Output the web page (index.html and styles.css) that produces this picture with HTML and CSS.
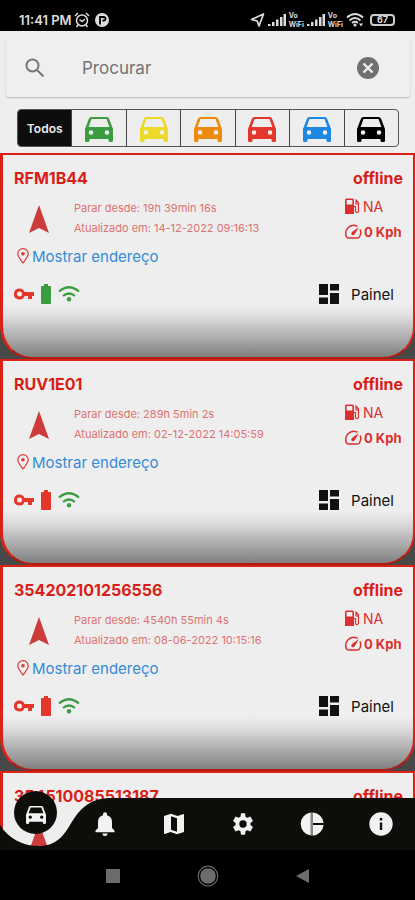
FILE: index.html
```html
<!DOCTYPE html>
<html lang="pt">
<head>
<meta charset="utf-8">
<meta name="viewport" content="width=device-width, initial-scale=1">
<title>Veículos</title>
<link rel="stylesheet" href="styles.css">
</head>
<body>
<svg class="sprite" aria-hidden="true">
  <symbol id="car" viewBox="0 0 28 25"><path fill-rule="evenodd" d="M6.500 0H21.500Q23.500 0 24.200 2L28 12V23.500Q28 25 26.500 25H25Q23.500 25 23.500 23.500V22H4.500V23.500Q4.500 25 3 25H1.500Q0 25 0 23.500V12L3.800 2Q4.500 0 6.500 0ZM6.500 2L3.600 10H24.400L21.500 2ZM6 13.200A2.300 2.300 0 1 0 6 17.800A2.300 2.300 0 1 0 6 13.200ZM22 13.200A2.300 2.300 0 1 0 22 17.800A2.300 2.300 0 1 0 22 13.200Z"/></symbol>
  <symbol id="arrow" viewBox="0 0 24 30"><path d="M12 1L22 29L12 24L2 29Z"/></symbol>
  <symbol id="pin" viewBox="0 0 12 16"><path fill="none" stroke="currentColor" stroke-width="1.200" d="M6 15C3 11 .8 8.500 .8 5.800A5.200 5.200 0 0 1 11.200 5.800C11.200 8.500 9 11 6 15Z"/><circle cx="6" cy="5.800" r="1.800"/></symbol>
  <symbol id="fuel" viewBox="0 0 16 17"><path fill-rule="evenodd" d="M1 16V2Q1 .5 2.500 .5H8.500Q10 .5 10 2V16ZM2.600 2V6.500H8.400V2Z"/><path fill="none" stroke="currentColor" stroke-width="1.200" d="M10 8.500H11.500V13.500Q12.800 16 14.500 13.500V5L11.500 1.500M12 3V6H14.500"/></symbol>
  <symbol id="speed" viewBox="0 0 18 15"><path fill="none" stroke="currentColor" stroke-width="1.500" stroke-linecap="round" d="M13 2A8 8 0 0 0 3 13.500Q3.500 14 4.500 14H13.500Q14.500 14 15 13.500A8 8 0 0 0 16.300 6"/><path d="M15 3L10.500 10.500Q9 12 7.700 10.800Q6.500 9.500 8 8Z"/></symbol>
  <symbol id="key" viewBox="0 0 20 12"><path fill-rule="evenodd" d="M5.500 .5A5.500 5.500 0 0 1 10.600 4H20V8H18V11H14V8H10.600A5.500 5.500 0 1 1 5.500 .5ZM5.500 3.500A2.500 2.500 0 1 0 5.500 8.500A2.500 2.500 0 1 0 5.500 3.500Z"/></symbol>
  <symbol id="battery" viewBox="0 0 10 20"><path d="M3 0H7V2H9Q10 2 10 3V19Q10 20 9 20H1Q0 20 0 19V3Q0 2 1 2H3Z"/></symbol>
  <symbol id="wifi" viewBox="0 0 22 16"><path fill="none" stroke="currentColor" stroke-width="2.200" d="M1 5.500Q11 -3 21 5.500M5 10Q11 5 17 10"/><circle cx="11" cy="13.300" r="2.200"/></symbol>
  <symbol id="netwifi" viewBox="0 0 18 14"><path fill="none" stroke="currentColor" stroke-width="1.800" d="M1 4.500Q9 -2.500 17 4.500M3.500 7.500Q9 2.500 14.500 7.500M6 10Q9 7.500 12 10"/><circle cx="9" cy="12" r="1.600"/><path d="M13 10.500L15 13.500L17 10.500Z"/></symbol>
  <symbol id="panel" viewBox="0 0 20 20"><path d="M0 0H9V11H0ZM11 0H20V6.500H11ZM0 13.500H9V20H0ZM11 9H20V20H11Z"/></symbol>
  <symbol id="signal" viewBox="0 0 18 12"><path d="M0 10H2.500V12H0ZM4 8H6.500V12H4ZM8 5.500H10.500V12H8ZM12 3H14.500V12H12ZM15.500 0H18V12H15.500Z"/></symbol>
</svg>

<div class="screen">
  <header class="status">
    <span class="clock">11:41 PM</span>
    <svg class="alarm" viewBox="0 0 16 16"><g fill="none" stroke="currentColor" stroke-width="1.500"><circle cx="8" cy="8.500" r="5.500"/><path d="M1 4L4 1M15 4L12 1M5.500 7.500L8 9.500L11 7M4 13L2.500 15M12 13L13.500 15"/></g></svg>
    <svg class="badge" viewBox="0 0 14 14"><circle cx="7" cy="7" r="7"/><path fill="none" stroke="#000" stroke-width="1.800" d="M5 11.500V4H8.500Q10.500 4 10.500 5.800T8.500 7.500H7.500"/></svg>
    <div class="system">
      <svg class="locate" viewBox="0 0 15 14"><path fill="none" stroke="currentColor" stroke-width="1.700" stroke-linejoin="round" d="M13.500 1L9 13L7.200 8L1.500 6.500Z"/></svg>
      <svg class="signal"><use href="#signal"/></svg>
      <span class="vowifi"><span>Vo</span><span>WiFi</span></span>
      <svg class="signal"><use href="#signal"/></svg>
      <span class="vowifi"><span>Vo</span><span>WiFi</span></span>
      <svg class="net"><use href="#netwifi"/></svg>
      <span class="charge">67</span>
    </div>
  </header>

  <form class="search">
    <svg class="lens" viewBox="0 0 20 20"><path fill="none" stroke="currentColor" stroke-width="2" d="M12.500 12.500L18.500 18.500M13.500 7.500A6 6 0 1 1 1.500 7.500A6 6 0 1 1 13.500 7.500Z"/></svg>
    <input type="text" placeholder="Procurar" aria-label="Procurar">
    <button type="reset" class="clear" aria-label="Limpar"><svg viewBox="0 0 22 22"><circle cx="11" cy="11" r="11"/><path stroke="#eee" stroke-width="2.400" d="M6.500 6.500L15.500 15.500M15.500 6.500L6.500 15.500"/></svg></button>
  </form>

  <div class="filters">
    <button class="all">Todos</button>
    <button class="green" aria-label="Verde"><svg><use href="#car"/></svg></button>
    <button class="yellow" aria-label="Amarelo"><svg><use href="#car"/></svg></button>
    <button class="orange" aria-label="Laranja"><svg><use href="#car"/></svg></button>
    <button class="red" aria-label="Vermelho"><svg><use href="#car"/></svg></button>
    <button class="blue" aria-label="Azul"><svg><use href="#car"/></svg></button>
    <button class="black" aria-label="Preto"><svg><use href="#car"/></svg></button>
  </div>

  <main class="list">
    <div class="slot"><article class="card">
      <div class="head"><h2>RFM1B44</h2><span>offline</span></div>
      <div class="info">
        <svg class="arrow"><use href="#arrow"/></svg>
        <div class="times"><p>Parar desde: 19h 39min 16s</p><p>Atualizado em: 14-12-2022 09:16:13</p></div>
        <div class="meters"><p><svg class="fuel"><use href="#fuel"/></svg>NA</p><p class="kph"><svg class="speed"><use href="#speed"/></svg>0 Kph</p></div>
      </div>
      <a class="address" href="#"><svg><use href="#pin"/></svg>Mostrar endereço</a>
      <div class="foot">
        <svg class="key red"><use href="#key"/></svg><svg class="battery green"><use href="#battery"/></svg><svg class="wifi green"><use href="#wifi"/></svg>
        <button class="panel"><svg><use href="#panel"/></svg>Painel</button>
      </div>
    </article></div>
    <div class="slot"><article class="card">
      <div class="head"><h2>RUV1E01</h2><span>offline</span></div>
      <div class="info">
        <svg class="arrow"><use href="#arrow"/></svg>
        <div class="times"><p>Parar desde: 289h 5min 2s</p><p>Atualizado em: 02-12-2022 14:05:59</p></div>
        <div class="meters"><p><svg class="fuel"><use href="#fuel"/></svg>NA</p><p class="kph"><svg class="speed"><use href="#speed"/></svg>0 Kph</p></div>
      </div>
      <a class="address" href="#"><svg><use href="#pin"/></svg>Mostrar endereço</a>
      <div class="foot">
        <svg class="key red"><use href="#key"/></svg><svg class="battery red"><use href="#battery"/></svg><svg class="wifi green"><use href="#wifi"/></svg>
        <button class="panel"><svg><use href="#panel"/></svg>Painel</button>
      </div>
    </article></div>
    <div class="slot"><article class="card">
      <div class="head"><h2>354202101256556</h2><span>offline</span></div>
      <div class="info">
        <svg class="arrow"><use href="#arrow"/></svg>
        <div class="times"><p>Parar desde: 4540h 55min 4s</p><p>Atualizado em: 08-06-2022 10:15:16</p></div>
        <div class="meters"><p><svg class="fuel"><use href="#fuel"/></svg>NA</p><p class="kph"><svg class="speed"><use href="#speed"/></svg>0 Kph</p></div>
      </div>
      <a class="address" href="#"><svg><use href="#pin"/></svg>Mostrar endereço</a>
      <div class="foot">
        <svg class="key red"><use href="#key"/></svg><svg class="battery red"><use href="#battery"/></svg><svg class="wifi green"><use href="#wifi"/></svg>
        <button class="panel"><svg><use href="#panel"/></svg>Painel</button>
      </div>
    </article></div>
    <div class="slot"><article class="card">
      <div class="head"><h2>354510085513187</h2><span>offline</span></div>
      <div class="info"><svg class="arrow"><use href="#arrow"/></svg></div>
    </article></div>
  </main>

  <div class="bottom">
    <nav class="tabs">
      <svg class="notch" viewBox="0 0 116 52"><path d="M0 27C9 41 23 48 39 48C55 48 63 39 70 27C80 10 90 0 112 0H116V52H0Z"/></svg>
      <a class="current" href="#" aria-label="Veículos"><svg viewBox="0 0 28 25"><use href="#car"/></svg></a>
      <a href="#" aria-label="Alertas"><svg viewBox="0 0 24 24"><path d="M12 24Q14.500 24 14.500 21.500H9.500Q9.500 24 12 24ZM19 16V10Q19 4.500 14 3.200V2Q14 .3 12 .3T10 2V3.200Q5 4.500 5 10V16L2.500 18.500V20.300H21.500V18.500Z"/></svg></a>
      <a href="#" aria-label="Mapa"><svg viewBox="0 0 24 24"><path fill-rule="evenodd" d="M21.500 2L15.500 4L9 1.800L2 4V21.500L3 22L8.500 20L15 22.300L22 20V2.500ZM9 4.200L15 6.300V19.800L9 17.700Z"/></svg></a>
      <a href="#" aria-label="Ajustes"><svg viewBox="0 0 24 24"><path d="M19.400 13L19.500 12L19.400 11L22 9L19.400 4.500L16.300 5.800L14.500 4.800L14 1.200H10L9.500 4.800L7.700 5.800L4.600 4.500L2 9L4.600 11V13L2 15L4.600 19.500L7.700 18.200L9.500 19.200L10 22.800H14L14.500 19.200L16.300 18.200L19.400 19.500L22 15Z"/><circle fill="#0d0d0a" cx="12" cy="12" r="3.700"/></svg></a>
      <a href="#" aria-label="Relatórios"><svg viewBox="0 0 24 24"><path d="M10.800 .5V23.500A11.600 11.600 0 0 1 10.800 .5ZM13 .5A11.600 11.600 0 0 1 23.600 11H13ZM13 13H23.600A11.600 11.600 0 0 1 13 23.500Z"/><path fill="#888" d="M10.800 .5H13V23.500H10.800Z"/></svg></a>
      <a href="#" aria-label="Informações"><svg viewBox="0 0 24 24"><circle cx="12" cy="12" r="11.700"/><path fill="#111" d="M10.800 6H13.200V8.400H10.800ZM10.800 10.500H13.200V18H10.800Z"/></svg></a>
    </nav>
    <div class="keys">
      <svg viewBox="0 0 22 22"><rect x="4" y="4" width="14" height="14"/></svg>
      <svg viewBox="0 0 22 22"><circle cx="11" cy="11" r="7.800"/><circle cx="11" cy="11" r="9.800" fill="none" stroke="currentColor" stroke-width="1.200"/></svg>
      <svg viewBox="0 0 22 22"><path d="M4 11L17 4V18Z"/></svg>
    </div>
  </div>
</div>
</body>
</html>
```
FILE: styles.css
```css
* { box-sizing: border-box; }
body {
  margin: 0;
  background: #eee;
  font-family: Inter, "Open Sans", sans-serif;
}
h2, p { margin: 0; font-size: inherit; }
svg { display: block; flex: none; fill: currentColor; }
button { border: 0; padding: 0; background: none; font: inherit; color: inherit; }
a { text-decoration: none; color: inherit; }
.sprite { position: absolute; width: 0; height: 0; }
.screen {
  position: relative;
  height: 100vh;
  display: flex;
  flex-direction: column;
  overflow: hidden;
}

.status {
  display: flex;
  align-items: center;
  flex: none;
  height: 31px;
  padding: 8px 20px 0 19px;
  background: #000;
  color: #ddd;
}
.clock { font-size: 13px; font-weight: 600; }
.alarm { width: 16px; height: 16px; margin-left: 2px; }
.badge { width: 14px; height: 14px; margin-left: 5px; }
.system { display: flex; align-items: center; gap: 3px; margin-left: auto; }
.locate { width: 15px; height: 14px; }
.signal { width: 18px; height: 12px; }
.vowifi { display: grid; font-size: 7px; line-height: 9px; font-weight: 700; }
.net { width: 18px; height: 14px; }
.charge {
  width: 25px;
  margin-left: 3px;
  border: 2px solid #ccc;
  border-radius: 4px;
  font-size: 9px;
  line-height: 8px;
  font-weight: 700;
  text-align: center;
}

.search {
  display: flex;
  align-items: center;
  flex: none;
  height: 59px;
  margin: 7px 5px 0 6px;
  padding: 0 31px 0 19px;
  border-radius: 4px;
  background: #efefef;
  box-shadow: 0 1px 2px #bbb;
}
.lens { width: 20px; height: 20px; color: #777; }
.search input {
  flex: 1;
  min-width: 0;
  margin-left: 37px;
  padding: 0;
  border: 0;
  outline: 0;
  background: none;
  font: 17px Inter, "Open Sans", sans-serif;
  color: #666;
}
.search input::placeholder { color: #737373; opacity: 1; }
.clear { color: #707070; }
.clear svg { width: 22px; height: 22px; }

.filters {
  display: flex;
  flex: none;
  height: 38px;
  margin: 12px 16px 6px 17px;
  border: 1px solid #555;
  border-radius: 4px;
  overflow: hidden;
}
.filters button { flex: 1; display: grid; place-items: center; }
.filters button + button { border-left: 1px solid #444; }
.filters svg { width: 28px; height: 25px; margin-top: 2px; }
.filters .all { background: #0d0d0d; color: #eee; font-size: 12px; font-weight: 600; }
.green { color: #3a9d40; }
.yellow { color: #ecd928; }
.orange { color: #ed8b0c; }
.red { color: #e5362c; }
.blue { color: #1d87e4; }
.black { color: #000; }

.list { flex: 1; min-height: 0; overflow: hidden; }
.slot { background: #484848; }
.card {
  height: 206px;
  padding: 13px 10px 0 11px;
  border: 2px solid #dc2216;
  border-left-width: 3px;
  border-bottom-color: #b01c12;
  border-radius: 0 0 32px 32px;
  background: linear-gradient(#eee 0 74%, #ddd 80%, #808080 100%);
  color: #dc2e2e;
}
.head {
  display: flex;
  justify-content: space-between;
  font-size: 16px;
  line-height: 20px;
  font-weight: 700;
  color: #d91e18;
}
.info { display: flex; height: 50px; margin-top: 6px; }
.arrow { width: 24px; height: 30px; margin: 10px 0 0 13px; color: #cc3c3c; }
.times {
  margin: 4px 0 0 23px;
  font-size: 11px;
  line-height: 20px;
  color: #dc7373;
}
.meters { margin-left: auto; width: 59px; }
.meters p { display: flex; align-items: center; gap: 3px; height: 25px; font-size: 14px; white-space: nowrap; }
.meters .kph { gap: 2px; font-size: 13px; font-weight: 700; }
.fuel { width: 16px; height: 17px; }
.speed { width: 18px; height: 15px; }
.address {
  display: flex;
  align-items: center;
  gap: 3px;
  height: 24px;
  padding-left: 3px;
  font-size: 15px;
  color: #348bd8;
}
.address svg { width: 12px; height: 16px; color: #d93a35; }
.foot { display: flex; align-items: center; height: 24px; margin-top: 14px; padding-right: 9px; }
.key { width: 20px; height: 12px; }
.battery { width: 10px; height: 20px; margin-left: 7px; }
.wifi { width: 22px; height: 16px; margin-left: 7px; }
.panel { display: flex; align-items: center; gap: 12px; margin-left: auto; font-size: 15px; color: #111; }
.panel svg { width: 20px; height: 20px; }

.bottom { position: absolute; left: 0; right: 0; bottom: 0; }
.tabs {
  position: relative;
  display: flex;
  height: 52px;
  color: #f2f2f2;
  background: linear-gradient(#0d0d0a, #0d0d0a) 115px 0 no-repeat;
}
.notch { position: absolute; left: 0; top: 0; width: 116px; height: 52px; color: #0d0d0a; }
.tabs a { position: relative; flex: 1; display: grid; place-items: center; }
.tabs a svg { width: 24px; height: 24px; }
.tabs .current::before {
  content: "";
  position: absolute;
  top: -7px;
  left: 14px;
  width: 43px;
  height: 43px;
  border-radius: 50%;
  background: #0d0d0a;
}
.tabs .current { padding: 0 0 19px 2px; }
.tabs .current svg { position: relative; width: 20px; height: 18px; }
.keys {
  display: flex;
  justify-content: center;
  gap: 73px;
  height: 50px;
  padding-top: 15px;
  background: #000;
  color: #6c6c6c;
}
.keys svg { width: 22px; height: 22px; }
```
